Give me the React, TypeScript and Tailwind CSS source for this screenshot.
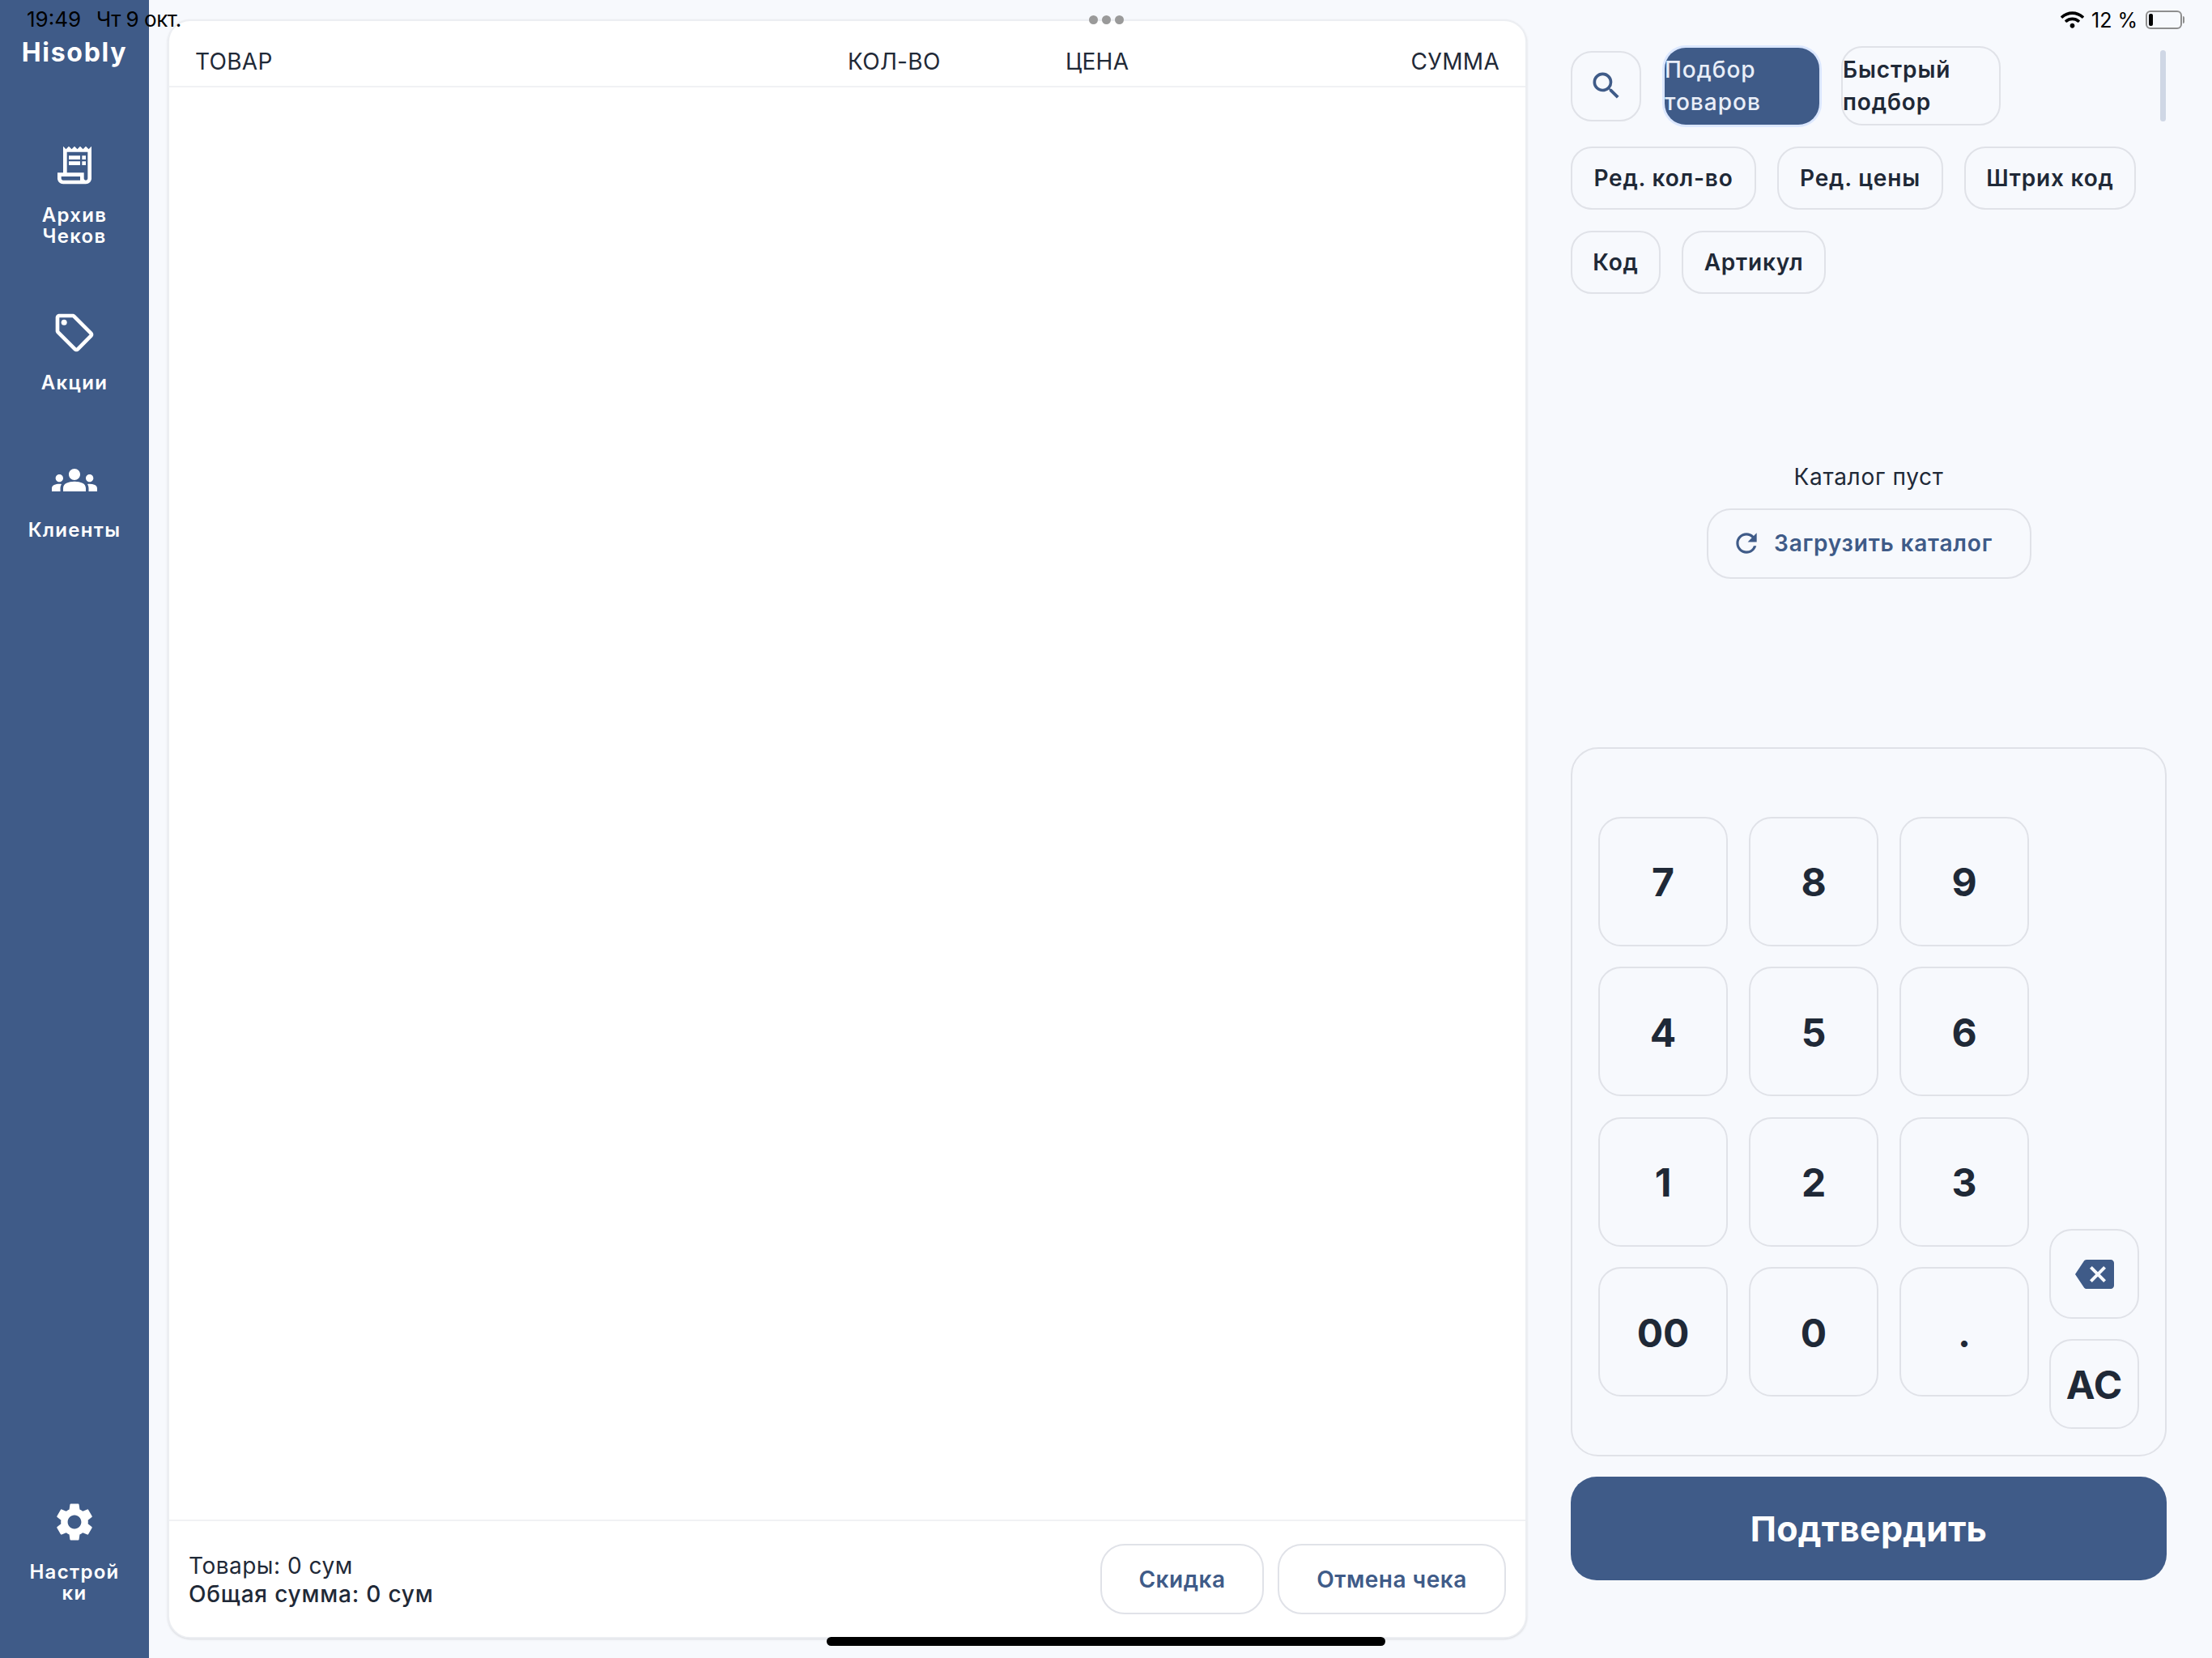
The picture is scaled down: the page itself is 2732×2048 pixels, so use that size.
import { FaWifi } from 'react-icons/fa';
import {
  MdBackspace,
  MdGroups,
  MdOutlineLocalOffer,
  MdOutlineReceiptLong,
  MdRefresh,
  MdSearch,
  MdSettings,
} from 'react-icons/md';

const keys = ['7', '8', '9', '4', '5', '6', '1', '2', '3', '00', '0', '.'];

function NavItem({ icon, label, className = '' }: { icon: React.ReactNode; label: React.ReactNode; className?: string }) {
  return (
    <div className={`flex flex-col items-center ${className}`}>
      {icon}
      <span className="mt-[21px] text-center text-[24px] leading-[26px] font-semibold tracking-[1.3px] text-white">{label}</span>
    </div>
  );
}

function Pill({ children, w }: { children: React.ReactNode; w: string }) {
  return (
    <button className={`h-[78px] ${w} rounded-[26px] border-2 border-[#e0e2e8] text-[28px] font-semibold tracking-[0.8px] text-[#1f2937]`}>
      {children}
    </button>
  );
}

export default function App() {
  return (
    <div className="relative flex h-[2048px] w-[2732px] overflow-hidden bg-[#f7f9fd] font-['Inter',sans-serif]">
      {/* статус-бар */}
      <div className="absolute left-[33px] top-[10px] flex gap-[19px] text-[26px] leading-[28px] text-black">
        <span>19:49</span>
        <span className="tracking-[-0.5px]">Чт 9 окт.</span>
      </div>
      <div className="absolute left-[1345px] top-[19px] flex gap-[5px]">
        <div className="h-[11px] w-[11px] rounded-full bg-[#9a9a9a]" />
        <div className="h-[11px] w-[11px] rounded-full bg-[#9a9a9a]" />
        <div className="h-[11px] w-[11px] rounded-full bg-[#9a9a9a]" />
      </div>
      <div className="absolute right-[34px] top-[10px] flex items-center text-[25px] leading-[28px] text-black">
        <FaWifi className="mr-[9px] text-[29px]" />
        <span>12 %</span>
        <div className="ml-[10px] flex h-[23px] w-[45px] items-center rounded-[6px] border-2 border-[#8e8e8e] pl-[2px]">
          <div className="h-[15px] w-[5px] rounded-[2px] bg-black" />
        </div>
        <div className="ml-[1px] h-[9px] w-[2px] rounded-r bg-[#8e8e8e]" />
      </div>

      {/* сайдбар */}
      <aside className="flex h-full w-[184px] shrink-0 flex-col items-center bg-[#3f5b88] pb-[67px] pt-[46px]">
        <div className="text-[32px] leading-[38px] font-bold tracking-[1.7px] text-white">Hisobly</div>
        <NavItem
          className="mt-[92px]"
          icon={<MdOutlineReceiptLong className="text-[56px] text-white" />}
          label={<>Архив<br />Чеков</>}
        />
        <NavItem className="mt-[78px]" icon={<MdOutlineLocalOffer className="text-[56px] text-white" />} label="Акции" />
        <NavItem className="mt-[79px]" icon={<MdGroups className="text-[56px] text-white" />} label="Клиенты" />
        <NavItem className="mt-auto" icon={<MdSettings className="text-[56px] text-white" />} label={<>Настрой<br />ки</>} />
      </aside>

      {/* чек */}
      <main className="ml-[23px] mt-[24px] flex h-[2000px] w-[1679px] shrink-0 flex-col rounded-[28px] border-2 border-[#eceef2] bg-white shadow-sm">
        <div className="grid h-[82px] shrink-0 grid-cols-[806px_269px_1fr] items-center border-b-2 border-[#f0f1f4] pl-[32px] pr-[32px] pt-[20px] text-[28px] tracking-[0.3px] text-[#1f2937]">
          <span>ТОВАР</span>
          <span>КОЛ-ВО</span>
          <div className="flex justify-between">
            <span>ЦЕНА</span>
            <span>СУММА</span>
          </div>
        </div>
        <div className="flex-1" />
        <div className="flex h-[145px] shrink-0 items-center justify-between border-t-2 border-[#f0f1f4] pl-[24px] pr-[24px]">
          <div className="pt-[2px] text-[28px] leading-[35px] text-[#1f2937]">
            <div className="tracking-[0.5px]">Товары: 0 сум</div>
            <div className="font-medium tracking-[0.8px]">Общая сумма: 0 сум</div>
          </div>
          <div className="flex gap-[17px] text-[28px] font-semibold tracking-[0.5px] text-[#3f5b88]">
            <button className="h-[87px] w-[202px] rounded-[30px] border-2 border-[#e0e2e8]">Скидка</button>
            <button className="h-[87px] w-[282px] rounded-[30px] border-2 border-[#e0e2e8]">Отмена чека</button>
          </div>
        </div>
      </main>

      {/* правая колонка */}
      <section className="ml-[54px] flex w-[736px] shrink-0 flex-col pb-[96px] pt-[57px]">
        <div className="flex items-center">
          <button className="flex h-[87px] w-[87px] items-center justify-center rounded-[26px] border-2 border-[#e0e2e8]">
            <MdSearch className="text-[44px] text-[#3f5b88]" />
          </button>
          <button className="ml-[29px] h-[95px] w-[191px] rounded-[26px] bg-[#3f5b88] text-left text-[28px] leading-[40px] font-medium tracking-[1px] text-[#e9eef8] ring-[3px] ring-[#dbe7ff]">
            Подбор<br />товаров
          </button>
          <button className="ml-[27px] h-[98px] w-[197px] rounded-[26px] border-2 border-[#e0e2e8] text-left text-[28px] leading-[40px] font-semibold tracking-[0.9px] text-[#1f2937]">
            Быстрый<br />подбор
          </button>
          <div className="ml-auto mr-[1px] h-[88px] w-[7px] rounded-full bg-[#cfd7e5]" />
        </div>
        <div className="mt-[26px] flex gap-[26px]">
          <Pill w="w-[229px]">Ред. кол-во</Pill>
          <Pill w="w-[205px]">Ред. цены</Pill>
          <Pill w="w-[212px]">Штрих код</Pill>
        </div>
        <div className="mt-[26px] flex gap-[26px]">
          <Pill w="w-[111px]">Код</Pill>
          <Pill w="w-[178px]">Артикул</Pill>
        </div>

        <div className="flex flex-1 flex-col items-center justify-center">
          <div className="text-[28px] leading-[34px] tracking-[0.7px] text-[#1f2937]">Каталог пуст</div>
          <button className="mt-[22px] flex h-[87px] w-[401px] items-center justify-center gap-[15px] rounded-[30px] border-2 border-[#e0e2e8] pr-[17px] text-[28px] font-semibold tracking-[0.8px] text-[#3f5b88]">
            <MdRefresh className="text-[38px]" />
            Загрузить каталог
          </button>
        </div>

        <div className="flex h-[876px] shrink-0 items-end rounded-[34px] border-2 border-[#e0e2e8] pb-[32px] pl-[32px]">
          <div className="mb-[40px] grid grid-cols-[160px_160px_160px] gap-x-[26px] gap-y-[25.5px]">
            {keys.map((k) => (
              <button
                key={k}
                className="h-[160px] rounded-[28px] border-2 border-[#e0e2e8] pt-[3px] text-[48px] font-bold text-[#1f2937]"
              >
                {k}
              </button>
            ))}
          </div>
          <div className="ml-[25px] flex flex-col gap-[25px]">
            <button className="flex h-[111px] w-[111px] items-center justify-center rounded-[28px] border-2 border-[#e0e2e8]">
              <MdBackspace className="text-[48px] text-[#3f5b88]" />
            </button>
            <button className="h-[111px] w-[111px] rounded-[28px] border-2 border-[#e0e2e8] pt-[3px] text-[48px] font-bold text-[#1f2937]">
              AC
            </button>
          </div>
        </div>
        <button className="mt-[25px] h-[128px] shrink-0 rounded-[32px] bg-[#3f5b88] text-[43px] font-bold tracking-[0.2px] text-white">
          Подтвердить
        </button>
      </section>

      {/* home indicator */}
      <div className="absolute left-[1021px] top-[2022px] h-[11px] w-[690px] rounded-full bg-black" />
    </div>
  );
}
